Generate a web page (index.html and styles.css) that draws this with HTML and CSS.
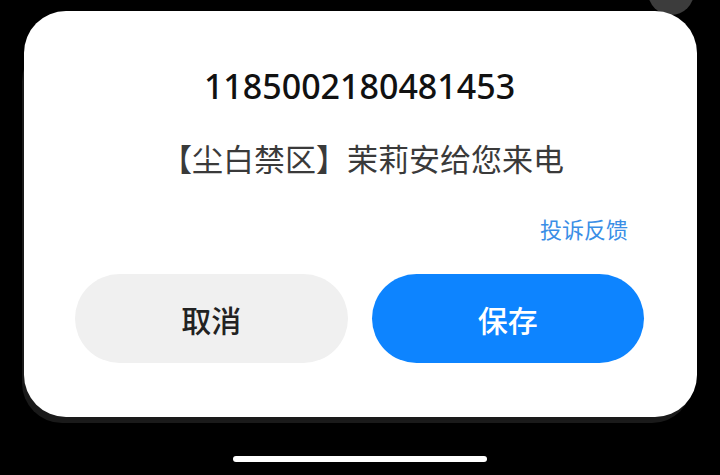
FILE: index.html
```html
<!DOCTYPE html>
<html lang="zh-CN">
<head>
<meta charset="utf-8">
<title>来电</title>
<link rel="stylesheet" href="styles.css">
</head>
<body>
<div class="screen">
  <div class="corner-dot"></div>
  <div class="card-wrap">
    <div class="card-shadow"></div>
    <div class="card">
      <div class="number">1185002180481453</div>
      <div class="caller">【尘白禁区】茉莉安给您来电</div>
      <div class="report-row"><span class="report">投诉反馈</span></div>
      <div class="actions">
        <button class="btn btn-cancel">取消</button>
        <button class="btn btn-save">保存</button>
      </div>
    </div>
  </div>
  <div class="home-bar"></div>
</div>
</body>
</html>
```
FILE: styles.css
```css
html, body {
  margin: 0;
  padding: 0;
  background: #000;
}
.screen {
  position: relative;
  width: 720px;
  height: 475px;
  overflow: hidden;
  display: flex;
  flex-direction: column;
  align-items: flex-start;
  font-family: "Noto Sans", "Noto Sans CJK SC", sans-serif;
}
.corner-dot {
  position: absolute;
  left: 648px;
  top: -31px;
  width: 46px;
  height: 46px;
  border-radius: 50%;
  background: #3c3c3c;
}
.card-wrap {
  position: relative;
  margin: 11px 0 0 24px;
  width: 673px;
}
.card-shadow {
  position: absolute;
  left: -2px;
  right: 5px;
  top: 30px;
  bottom: -6px;
  border-radius: 40px;
  background: #1a1a1a;
}
.card {
  position: relative;
  box-sizing: border-box;
  width: 673px;
  height: 406px;
  background: #fff;
  border-radius: 42px;
  padding: 55px 53px 0 51px;
  display: flex;
  flex-direction: column;
}
.number {
  font-family: "Noto Sans", sans-serif;
  font-weight: 500;
  font-size: 34px;
  line-height: 40px;
  color: #111;
  text-align: center;
}
.caller {
  margin-top: 32px;
  font-family: "Noto Sans CJK SC", sans-serif;
  font-size: 31px;
  line-height: 40px;
  color: #3a3a3a;
  text-align: center;
  padding-left: 6px;
}
.report-row {
  margin-top: 35px;
  display: flex;
  justify-content: flex-end;
  padding-right: 16px;
}
.report {
  font-family: "Noto Sans CJK SC", sans-serif;
  font-size: 22px;
  line-height: 30px;
  color: #3a8ee6;
}
.actions {
  margin-top: 31px;
  display: flex;
  gap: 24px;
}
.btn {
  flex: 1;
  height: 89px;
  border: none;
  border-radius: 45px;
  font-family: "Noto Sans CJK SC", sans-serif;
  font-weight: 500;
  font-size: 30px;
  padding: 0;
}
.btn-cancel {
  background: #f0f0f0;
  color: #222;
}
.btn-save {
  background: #0d84ff;
  color: #fff;
}
.home-bar {
  margin: 39px 0 0 233px;
  width: 254px;
  height: 6px;
  border-radius: 3px;
  background: #fff;
}
```
